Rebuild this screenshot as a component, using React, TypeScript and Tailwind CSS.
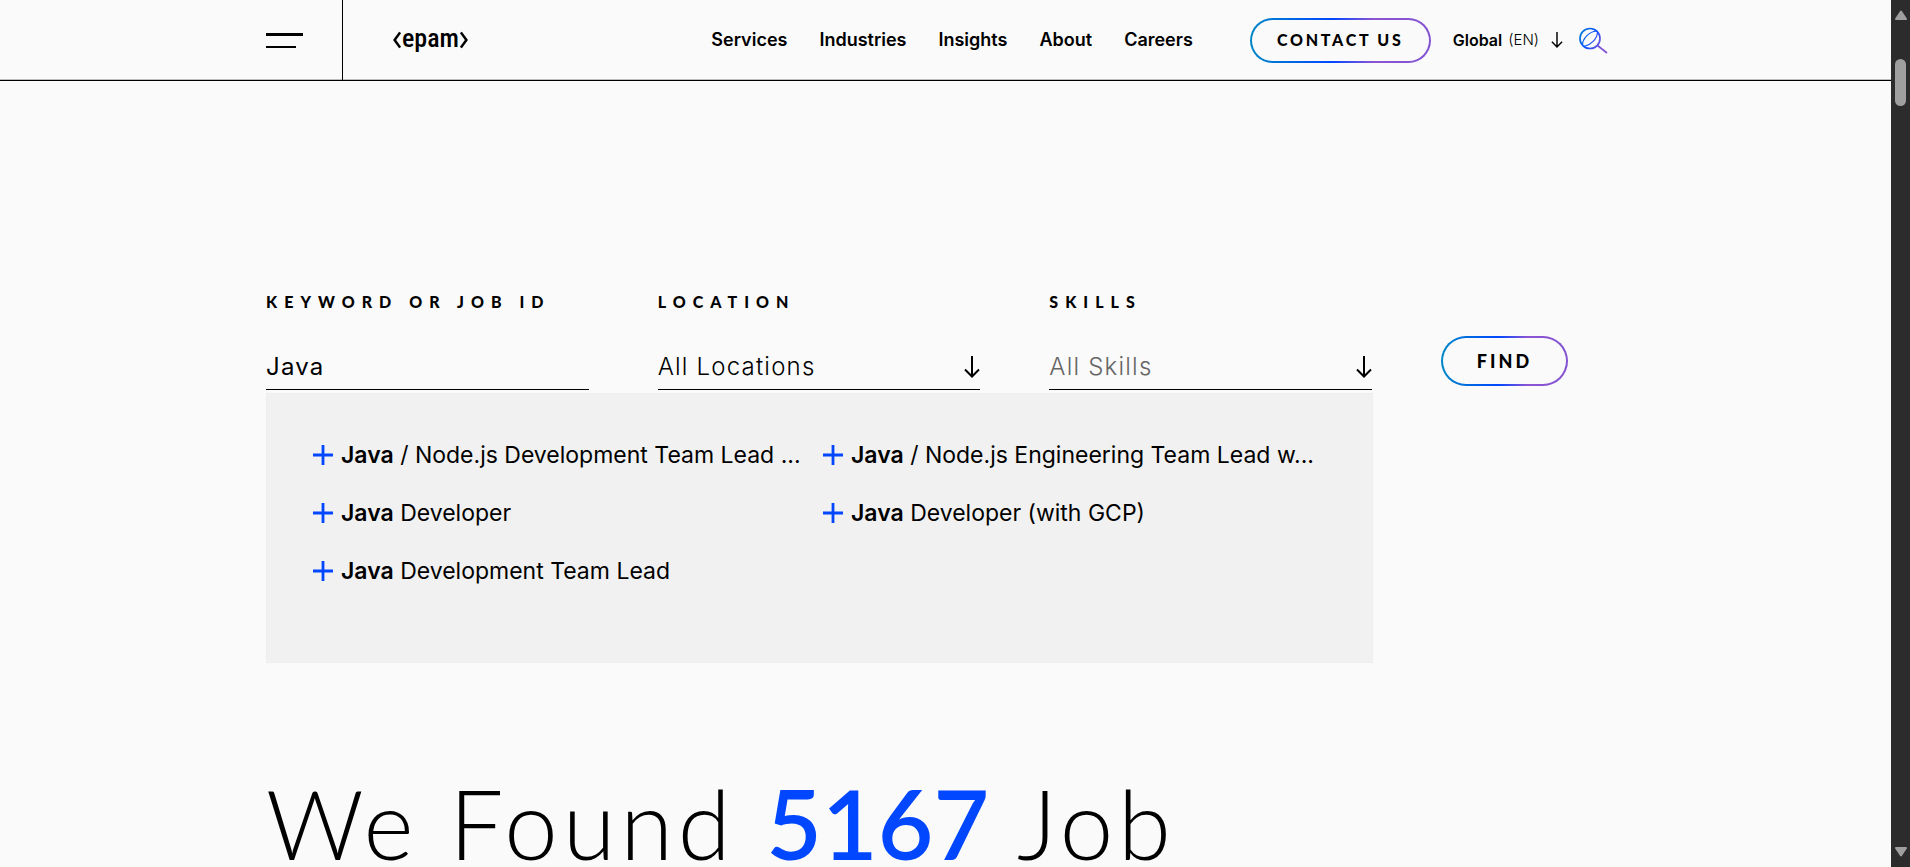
import React, { useState } from "react";

const navLinks = ["Services", "Industries", "Insights", "About", "Careers"];

const suggestions = [
  " / Node.js Development Team Lead ...",
  " / Node.js Engineering Team Lead w...",
  " Developer",
  " Developer (with GCP)",
  " Development Team Lead",
];

const pill =
  "rounded-full border-2 border-transparent font-['Lato',sans-serif] font-black [background:linear-gradient(#fafafa,#fafafa)_padding-box,linear-gradient(to_right,#0088c7,#0047ff_45%,#8b54d3_68%,#8453d2)_border-box]";

const label = "font-['Lato',sans-serif] text-base leading-6 font-black tracking-[0.44em] uppercase";

const picker =
  "col-start-1 row-start-1 h-[45px] w-full appearance-none bg-transparent text-2xl font-light tracking-wider outline-none";

function ArrowDown({ className }: { className: string }) {
  return (
    <svg viewBox="0 0 16 22" fill="none" stroke="currentColor" strokeWidth="2" className={className} aria-hidden="true">
      <path d="M8 0v20.5M1 13.5l7 7 7-7" />
    </svg>
  );
}

function Logo() {
  return (
    <a href="#home" aria-label="epam" className="flex h-8 items-center">
      <svg viewBox="0 0 9 20" className="h-5 w-2" fill="none" stroke="black" strokeWidth="2.8" aria-hidden="true">
        <path d="M8 1.5 1.8 10 8 18.5" />
      </svg>
      <span className="px-px pb-1 font-['Roboto_Condensed','Liberation_Sans_Narrow','DejaVu_Sans_Condensed',sans-serif] text-[26px] leading-8 font-medium">
        epam
      </span>
      <svg viewBox="0 0 9 20" className="h-5 w-2" fill="none" stroke="black" strokeWidth="2.8" aria-hidden="true">
        <path d="M1 1.5 7.2 10 1 18.5" />
      </svg>
    </a>
  );
}

function SearchIcon() {
  return (
    <svg viewBox="0 0 29 28" className="h-7 w-[29px]" fill="none" stroke="url(#search-stroke)" strokeWidth="1.7" aria-hidden="true">
      <defs>
        <linearGradient id="search-stroke" gradientUnits="userSpaceOnUse" x1="0" y1="8" x2="29" y2="24">
          <stop offset="0" stopColor="#0078d8" />
          <stop offset="0.4" stopColor="#0a50ff" />
          <stop offset="0.75" stopColor="#7d55d6" />
          <stop offset="1" stopColor="#8453d2" />
        </linearGradient>
      </defs>
      <circle cx="11" cy="12.5" r="10" />
      <path d="m18.5 19.5 9.5 7.5" />
      <path d="M3.5 19C3.5 13 10 5.5 17.5 5M5 20.5C12 19 18 13 18.5 6.5" strokeWidth="1.2" />
    </svg>
  );
}

function Header() {
  return (
    <header className="h-[81px] shrink-0 border-b border-black shadow-[inset_0_-1px_0_#bdbdbd]">
      <div className="mx-auto flex h-full max-w-[1359px] items-center">
        <div className="flex h-full w-[77px] shrink-0 items-center border-r border-black">
          <button type="button" aria-label="Open menu" className="flex flex-col gap-[10px]">
            <span className="block h-[3px] w-[37px] bg-black" />
            <span className="block h-[2px] w-[30px] bg-black" />
          </button>
        </div>
        <div className="ml-[50px]">
          <Logo />
        </div>
        <nav className="ml-auto flex gap-8 text-lg font-semibold">
          {navLinks.map((item) => (
            <a key={item} href={`#${item.toLowerCase()}`}>
              {item}
            </a>
          ))}
        </nav>
        <a
          href="#contact"
          className={`${pill} ml-[57px] flex h-[45px] w-[181px] items-center justify-center text-base tracking-[0.17em]`}
        >
          CONTACT US
        </a>
        <button type="button" className="ml-[22px] flex items-center text-base">
          <span className="font-semibold">Global</span>
          <span className="ml-1.5 text-[15px] font-light">(EN)</span>
          <ArrowDown className="ml-3 h-4 w-3" />
        </button>
        <button type="button" aria-label="Search" className="mr-[17px] ml-4">
          <SearchIcon />
        </button>
      </div>
    </header>
  );
}

function SearchForm() {
  const [keyword, setKeyword] = useState("Java");
  return (
    <form className="flex items-start" onSubmit={(e) => e.preventDefault()}>
      <div className="w-[1107px]">
        <div className="grid grid-cols-3 gap-x-[69px] pr-px">
          <div className="flex flex-col gap-[30px]">
            <label htmlFor="keyword" className={label}>
              Keyword or Job ID
            </label>
            <input
              id="keyword"
              value={keyword}
              onChange={(e) => setKeyword(e.target.value)}
              className="h-[46px] w-full border-b border-black bg-transparent p-0 text-2xl tracking-wider outline-none"
            />
          </div>
          <div className="flex flex-col gap-[30px]">
            <label htmlFor="location" className={label}>
              Location
            </label>
            <div className="grid items-center border-b border-black">
              <select id="location" className={picker}>
                <option>All Locations</option>
              </select>
              <ArrowDown className="pointer-events-none col-start-1 row-start-1 h-[22px] w-4 justify-self-end" />
            </div>
          </div>
          <div className="flex flex-col gap-[30px]">
            <label htmlFor="skills" className={label}>
              Skills
            </label>
            <div className="grid items-center border-b border-black">
              <select id="skills" className={`${picker} text-[#666666]`}>
                <option>All Skills</option>
              </select>
              <ArrowDown className="pointer-events-none col-start-1 row-start-1 h-[22px] w-4 justify-self-end" />
            </div>
          </div>
        </div>
        <ul className="mt-[3px] grid h-[270px] grid-cols-[510px_1fr] content-start gap-y-[22px] border border-[#eeeeee] bg-[#f1f1f1] pt-[43px] pl-[46px] text-[23px] leading-9">
          {suggestions.map((rest) => (
            <li key={rest}>
              <button type="button" className="flex items-center gap-2 whitespace-pre">
                <svg viewBox="0 0 20 20" className="size-5" stroke="#0047ff" strokeWidth="2.8" aria-hidden="true">
                  <path d="M10 0v20M0 10h20" />
                </svg>
                <span>
                  <strong className="font-semibold">Java</strong>
                  {rest}
                </span>
              </button>
            </li>
          ))}
        </ul>
      </div>
      <button type="submit" className={`${pill} mt-[46px] ml-[68px] h-[50px] w-[127px] text-lg tracking-[0.17em]`}>
        FIND
      </button>
    </form>
  );
}

function Scrollbar() {
  return (
    <div aria-hidden="true" className="flex w-[19px] shrink-0 flex-col items-center bg-[#2c2c2c] py-[10px]">
      <svg viewBox="0 0 12 10" className="h-[10px] w-3" fill="#9f9f9f" stroke="#9f9f9f" strokeWidth="2" strokeLinejoin="round">
        <path d="M6 1.5 11 9H1z" />
      </svg>
      <div className="mt-[39px] h-[47px] w-[11px] rounded-full bg-[#9f9f9f]" />
      <svg viewBox="0 0 12 10" className="mt-auto h-[10px] w-3" fill="#9f9f9f" stroke="#9f9f9f" strokeWidth="2" strokeLinejoin="round">
        <path d="M6 8.5 11 1H1z" />
      </svg>
    </div>
  );
}

export default function App() {
  return (
    <div className="flex h-screen overflow-hidden bg-[#fafafa] font-['Inter','Open_Sans',sans-serif] text-black">
      <div className="flex min-w-0 flex-1 flex-col overflow-hidden">
        <Header />
        <main className="mx-auto w-full max-w-[1359px] pt-[209px]">
          <SearchForm />
          <h1 className="mt-[110px] font-['Lato',sans-serif] text-8xl leading-[100px] font-light tracking-wider whitespace-nowrap">
            We Found <span className="font-semibold tracking-normal text-[#0047ff]">5167</span> Job
          </h1>
        </main>
      </div>
      <Scrollbar />
    </div>
  );
}
